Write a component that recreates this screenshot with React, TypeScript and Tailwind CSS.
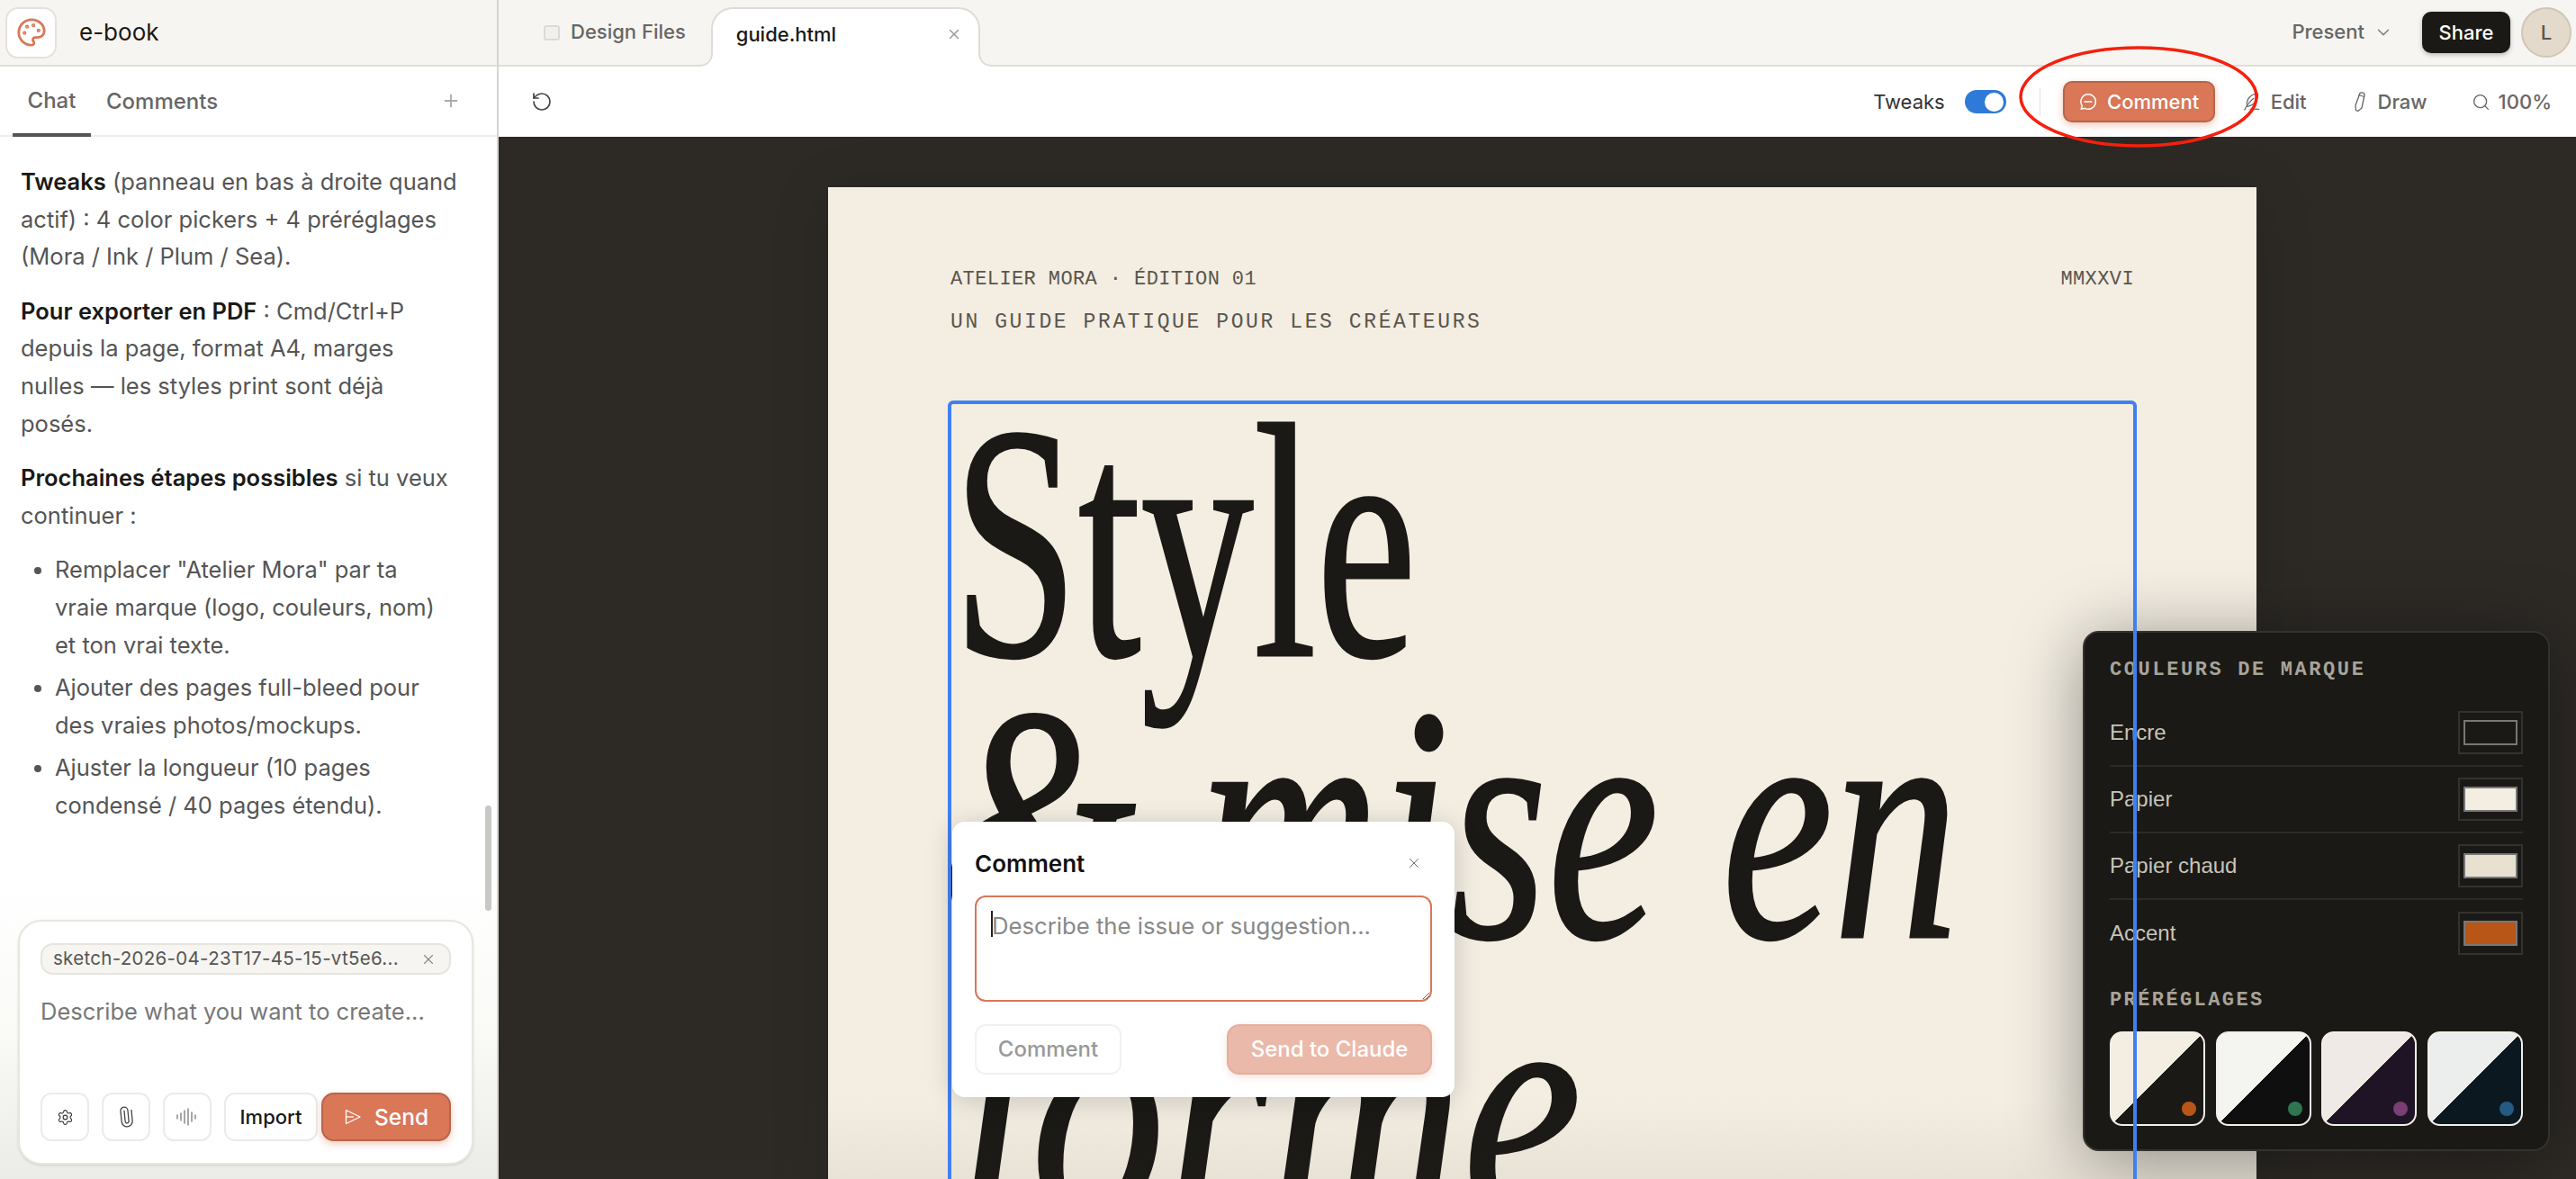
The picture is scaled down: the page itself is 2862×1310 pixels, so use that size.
import React from 'react';
import { ChevronDown, Paperclip, Palette, Plus, RotateCcw, Search, Settings, X } from 'lucide-react';

const SWATCHES = [
  { label: 'Encre', color: 'bg-[#1a1915]' },
  { label: 'Papier', color: 'bg-[#f3ede2]' },
  { label: 'Papier chaud', color: 'bg-[#e9e1d0]' },
  { label: 'Accent', color: 'bg-[#b85618]' },
];

const PRESETS = [
  { bg: 'bg-[linear-gradient(135deg,#f3ede2_50%,#1a1915_50%)]', dot: 'bg-[#b85618]' },
  { bg: 'bg-[linear-gradient(135deg,#f4f4f1_50%,#0f0f0f_50%)]', dot: 'bg-[#2f7550]' },
  { bg: 'bg-[linear-gradient(135deg,#efeae5_50%,#1e1425_50%)]', dot: 'bg-[#7a3e72]' },
  { bg: 'bg-[linear-gradient(135deg,#eceeee_50%,#0c1820_50%)]', dot: 'bg-[#255a82]' },
];

const CommentIcon = () => (
  <svg width="22" height="22" viewBox="0 0 24 24" fill="none" stroke="currentColor" strokeWidth="1.6" strokeLinecap="round" strokeLinejoin="round">
    <path d="M12 3a9 9 0 1 1-4 17l-4.5 1 1.2-4A9 9 0 0 1 12 3z" />
    <path d="M7.5 12c1-1 1.5 1 2.2 0s1.5 1 2.3 0 1.5 1 2.2 0 1 .5 2 0" />
  </svg>
);

const FeatherIcon = () => (
  <svg width="22" height="24" viewBox="0 0 24 26" fill="none" stroke="#666" strokeWidth="1.3" strokeLinecap="round" strokeLinejoin="round">
    <path d="M6 19c-1-6 1-11 6-14 3-1.500 6-2 7-2 .5 3-.5 7-2 9-2 3-6 6-11 7z" />
    <path d="M3 23c3-6 6-10 11-14" />
    <path d="M10 22c1-1 1.500 1 2.500 0s1.500 1 2.500 0 1.500 1 2.500 0 1.500 1 3 0" />
  </svg>
);

const PencilIcon = () => (
  <svg width="14" height="24" viewBox="0 0 14 24" fill="none" stroke="#666" strokeWidth="1.3" strokeLinecap="round" strokeLinejoin="round">
    <path d="M7 2.500c1-1.200 4.500-.5 5 1 .2 1-.2 2-.4 3L9 19l-4.500 3.500-2-1L2 16z" />
    <path d="M6 4.500l5.500 2" />
  </svg>
);

const SendIcon = () => (
  <svg width="20" height="20" viewBox="0 0 20 20" fill="none" stroke="currentColor" strokeWidth="1.3" strokeLinejoin="round">
    <path d="M2.500 2.500L18 10 2.500 17.500z" />
    <path d="M2.500 10H11" />
  </svg>
);

const WaveIcon = () => (
  <svg width="24" height="20" viewBox="0 0 24 20" fill="none" stroke="#777" strokeWidth="1.3" strokeLinecap="round">
    <path d="M1 8v4M5 6v8M9 3v14M13 1v18M17 5v10M21 8v4" />
  </svg>
);

const App: React.FC = () => {
  return (
    <div className="relative flex h-[1310px] w-full overflow-hidden bg-white font-['Inter',sans-serif] text-[#1a1915]">
      {/* Sidebar */}
      <aside className="relative flex w-[554px] shrink-0 flex-col border-r-2 border-[#d6d4ce] bg-white">
        <div className="flex h-[74px] shrink-0 items-center border-b-2 border-[#dedcd6] bg-[#f7f5f1] pl-[6px]">
          <div className="flex h-[57px] w-[57px] items-center justify-center rounded-[14px] border-2 border-[#e4e2dc] bg-white">
            <Palette size={34} strokeWidth={2} className="text-[#d97757]" />
          </div>
          <span className="ml-[25px] -mt-[2px] text-[26px]">e-book</span>
        </div>

        <div className="flex h-[78px] shrink-0 items-stretch border-b-2 border-[#ececea] pl-[14px] pr-[40px] text-[24px] font-medium text-[#666]">
          <div className="-mb-[2px] flex w-[87px] items-center justify-center border-b-4 border-[#555] pt-[2px]">Chat</div>
          <div className="ml-[17px] flex items-center pt-[2px]">Comments</div>
          <div className="ml-auto flex items-center text-[#aaa]">
            <Plus size={22} strokeWidth={2} />
          </div>
        </div>

        <div className="relative z-10 min-h-0 flex-1 overflow-hidden pl-[23px] pr-[41px] pt-[29px] text-[25.500px] leading-[41.600px] text-[#555]">
          <p>
            <strong className="font-semibold text-[#1a1915]">Tweaks</strong> (panneau en bas à droite quand actif) : 4 color pickers + 4 préréglages (Mora / Ink / Plum / Sea).
          </p>
          <p className="mt-[19px]">
            <strong className="font-semibold text-[#1a1915]">Pour exporter en PDF</strong> : Cmd/Ctrl+P depuis la page, format A4, marges nulles — les styles print sont déjà posés.
          </p>
          <p className="mt-[19px]">
            <strong className="font-semibold text-[#1a1915]">Prochaines étapes possibles</strong> si tu veux continuer :
          </p>
          <ul className="mt-[19px] list-disc pl-[38px] pr-[10px]">
            <li>Remplacer "Atelier Mora" par ta vraie marque (logo, couleurs, nom) et ton vrai texte.</li>
            <li className="mt-[6px]">Ajouter des pages full-bleed pour des vraies photos/mockups.</li>
            <li className="mt-[6px]">Ajuster la longueur (10 pages condensé / 40 pages étendu).</li>
          </ul>
        </div>

        {/* Fade behind the input */}
        <div className="absolute inset-x-0 bottom-0 h-[330px] bg-[linear-gradient(180deg,#ffffff_0%,#fafaf7_50%,#ebebe7_100%)]" />
        <div className="absolute right-[6px] top-[895px] h-[117px] w-[7px] rounded-full bg-[#c8c8c4]" />

        <div className="relative z-10 mb-[16px] ml-[20px] mr-[26px] flex h-[272px] shrink-0 flex-col rounded-[26px] border-2 border-[#e8e6e1] bg-white px-[23px] pb-[24px] pt-[24px] shadow-sm">
          <div className="flex h-[35px] items-center rounded-[14px] border-2 border-[#e6e4dd] bg-[#f7f5f1] pl-[12px] pr-[14px] text-[20.500px] tracking-[0.3px] text-[#555]">
            <span className="whitespace-nowrap">sketch-2026-04-23T17-45-15-vt5e6...</span>
            <X size={18} strokeWidth={1.5} className="ml-auto text-[#888]" />
          </div>
          <div className="mt-[23px] text-[25.500px] leading-[36px] text-[#777]">Describe what you want to create...</div>
          <div className="mt-auto flex h-[54px] items-stretch">
            <div className="flex w-[54px] items-center justify-center rounded-[12px] border-2 border-[#ebebe8] text-[#333]">
              <Settings size={19} strokeWidth={1.4} />
            </div>
            <div className="ml-[14px] flex w-[54px] items-center justify-center rounded-[12px] border-2 border-[#ebebe8] text-[#444]">
              <Paperclip size={24} strokeWidth={1.3} className="-rotate-[50deg]" />
            </div>
            <div className="ml-[14px] flex w-[54px] items-center justify-center rounded-[12px] border-2 border-[#ebebe8]">
              <WaveIcon />
            </div>
            <div className="ml-[14px] flex w-[104px] items-center justify-center rounded-[12px] border-2 border-[#ebebe8] text-[22px] font-medium">Import</div>
            <div className="ml-[4px] flex w-[144px] items-center justify-center gap-[14px] rounded-[14px] border-2 border-[#b8654a] bg-[#d97757] text-[24.500px] font-medium text-white shadow-[0_3px_8px_rgba(217,119,87,0.4)]">
              <SendIcon />
              Send
            </div>
          </div>
        </div>
      </aside>

      {/* Main */}
      <main className="flex min-w-0 flex-1 flex-col">
        <div className="flex h-[74px] shrink-0 items-center border-b-2 border-[#dedcd6] bg-[#f7f5f1] pl-[50px] pr-[5px] text-[22px] font-medium">
          <div className="h-[17px] w-[18px] rounded-[3px] border-2 border-[#dcdad4] bg-[#f2f0ec]" />
          <span className="ml-[12px] -mt-[2px] text-[#666]">Design Files</span>
          <div className="relative -mb-[2px] ml-[28px] flex h-[66px] w-[299px] items-center self-end rounded-t-[24px] border-2 border-b-0 border-[#dedcd6] bg-white pb-[8px] pl-[26px]">
            <svg className="absolute -left-[16px] -bottom-[0px]" width="16" height="16" viewBox="0 0 16 16" fill="none">
              <path d="M16 0C16 9 10 15 0 15V16H16Z" fill="#ffffff" />
              <path d="M15 0C15 9 10 15 0 15" stroke="#dedcd6" strokeWidth="2" />
            </svg>
            <svg className="absolute -right-[16px] -bottom-[0px]" width="16" height="16" viewBox="0 0 16 16" fill="none">
              <path d="M0 0C0 9 6 15 16 15V16H0Z" fill="#ffffff" />
              <path d="M1 0C1 9 6 15 16 15" stroke="#dedcd6" strokeWidth="2" />
            </svg>
            <span>guide.html</span>
            <X size={18} strokeWidth={2} className="ml-auto mr-[18px] text-[#999]" />
          </div>
          <span className="ml-auto -mt-[2px] text-[#666]">Present</span>
          <ChevronDown size={22} strokeWidth={1.5} className="ml-[10px] text-[#777]" />
          <div className="ml-[32px] flex h-[46px] w-[98px] items-center justify-center rounded-[10px] bg-[#1a1915] text-white shadow-[0_2px_5px_rgba(0,0,0,0.25)]">Share</div>
          <div className="ml-[12px] flex h-[56px] w-[56px] items-center justify-center rounded-full border-2 border-[#cfc6b6] bg-[#e3dacb] text-[#555]">L</div>
        </div>

        <div className="flex h-[78px] shrink-0 items-center bg-white pl-[46px] pr-[27px] text-[22px] font-medium text-[#666]">
          <RotateCcw size={24} strokeWidth={1.7} className="-ml-[10px] text-[#444]" />
          <span className="ml-auto font-normal text-[#333]">Tweaks</span>
          <div className="ml-[22px] flex h-[26px] w-[46px] items-center justify-end rounded-full bg-[#2f7ad9] pr-[3px]">
            <div className="h-[21px] w-[21px] rounded-full bg-white" />
          </div>
          <div className="ml-[37px] h-[32px] w-px bg-[#e2e2df]" />
          <div className="ml-[25px] flex h-[46px] w-[169px] items-center justify-center gap-[10px] rounded-[10px] border-2 border-[#b8654a] bg-[#d97757] text-white shadow-[0_3px_8px_rgba(217,119,87,0.4)]">
            <CommentIcon />
            Comment
          </div>
          <div className="ml-[30px]"><FeatherIcon /></div>
          <span className="ml-[10px]">Edit</span>
          <div className="ml-[52px]"><PencilIcon /></div>
          <span className="ml-[13px]">Draw</span>
          <Search size={21} strokeWidth={1.5} className="ml-[49px] text-[#666]" />
          <span className="ml-[9px]">100%</span>
        </div>

        {/* Canvas */}
        <div className="relative min-h-0 flex-1 overflow-hidden bg-[#2d2a26] pl-[366px] pt-[56px]">
          <div className="h-[2000px] w-[1587px] bg-[#f3ede2] px-[136px] pt-[91px] shadow-[0_10px_60px_rgba(0,0,0,0.15)]">
            <div className="flex justify-between font-['Liberation_Mono',monospace] text-[22px] leading-[24px] tracking-[0.400px] text-[#5a554c]">
              <span>ATELIER MORA · ÉDITION 01</span>
              <span>MMXXVI</span>
            </div>
            <div className="mt-[23px] font-['Liberation_Mono',monospace] text-[23px] leading-[24px] tracking-[2.600px] text-[#5a554c]">UN GUIDE PRATIQUE POUR LES CRÉATEURS</div>

            <div className="relative -mx-[3px] mt-[80px] h-[1200px]">
              <div className="absolute inset-0 z-20 rounded-[6px] border-4 border-[#3f80f0]" />
              <div className="-mt-[5px] whitespace-nowrap font-['Liberation_Serif',serif] text-[372px] text-[#1a1915] [-webkit-text-stroke:3px_#1a1915]">
                <span className="block h-[313px] origin-left scale-x-[0.674] pl-[8px] leading-[316px]">Style</span>
                <span className="-ml-[8px] block h-[316px] origin-left scale-x-[0.75] italic leading-[316px]">&amp; mise en</span>
                <span className="ml-[10px] block h-[316px] origin-left scale-x-[0.8] italic leading-[316px]">forme</span>
              </div>
            </div>
          </div>

          {/* Viewer bottom fade */}
          <div className="absolute inset-x-0 bottom-0 h-[90px] bg-[linear-gradient(180deg,rgba(0,0,0,0)_0%,rgba(60,50,30,0.06)_100%)]" />

          {/* Comment dialog */}
          <div className="absolute left-[504px] top-[761px] z-30 flex h-[306px] w-[558px] flex-col rounded-[14px] bg-white px-[25px] pt-[28px] shadow-[0_4px_30px_rgba(0,0,0,0.18)]">
            <div className="flex h-[36px] items-center">
              <span className="text-[26px] font-semibold text-[#111]">Comment</span>
              <X size={18} strokeWidth={1.3} className="ml-auto mr-[11px] text-[#666]" />
            </div>
            <div className="relative mt-[18px] h-[118px]">
              <textarea
                readOnly
                placeholder="Describe the issue or suggestion..."
                className="h-full w-full rounded-[12px] border-2 border-[#d97757] bg-white px-[17px] pt-[14px] text-[25.700px] leading-[36px] outline-none placeholder:text-[#888]"
              />
              <div className="absolute left-[18px] top-[17px] h-[29px] w-[2px] bg-[#222]" />
            </div>
            <div className="mt-[25px] flex h-[56px] items-stretch justify-between">
              <div className="flex w-[163px] items-center justify-center rounded-[12px] border-2 border-[#f1f1f0] text-[24px] font-medium text-[#999]">Comment</div>
              <div className="flex w-[228px] items-center justify-center rounded-[14px] border-2 border-[#e4ae9c] bg-[#ebb9a9] text-[24px] font-medium text-white shadow-[0_3px_8px_rgba(217,119,87,0.2)]">Send to Claude</div>
            </div>
          </div>

          {/* Tweaks panel */}
          <div className="absolute right-[29px] top-[549px] z-10 flex h-[578px] w-[519px] flex-col rounded-[18px] border-2 border-[#33322e] bg-[#1a1915] px-[28px] pt-[30px] shadow-[0_10px_80px_rgba(0,0,0,0.4)]">
            <div className="font-['Liberation_Mono',monospace] text-[22px] font-bold leading-[24px] tracking-[2.600px] text-[#a8a49a]">COULEURS DE MARQUE</div>
            <div className="mt-[21px]">
              {SWATCHES.map((s, i) => (
                <div key={s.label} className={`flex h-[74px] items-center justify-between font-['Liberation_Sans',sans-serif] text-[24px] text-[#c8c4ba] ${i < 3 ? 'border-b-2 border-[#2c2b27]' : ''}`}>
                  <span>{s.label}</span>
                  <div className="flex h-[48px] w-[72px] items-center justify-center border-2 border-[#33322e]">
                    <div className={`h-[28px] w-[60px] border-2 border-[#777] ${s.color}`} />
                  </div>
                </div>
              ))}
            </div>
            <div className="mt-[26px] font-['Liberation_Mono',monospace] text-[22px] font-bold leading-[24px] tracking-[2.400px] text-[#a8a49a]">PRÉRÉGLAGES</div>
            <div className="mt-[22px] flex justify-between">
              {PRESETS.map((p, i) => (
                <div key={i} className={`relative h-[105px] w-[106px] rounded-[14px] border-2 border-[#f3efe8] ${p.bg}`}>
                  <div className={`absolute bottom-[9px] right-[8px] h-[16px] w-[16px] rounded-full ${p.dot}`} />
                </div>
              ))}
            </div>
          </div>
        </div>
      </main>

      {/* Red annotation ring */}
      <svg className="absolute left-[2243px] top-[51px] z-40" width="266" height="113" viewBox="0 0 266 113" fill="none">
        <ellipse cx="133" cy="56.500" rx="131" ry="54.500" stroke="#f5200d" strokeWidth="3.500" />
      </svg>
    </div>
  );
};

export default App;
